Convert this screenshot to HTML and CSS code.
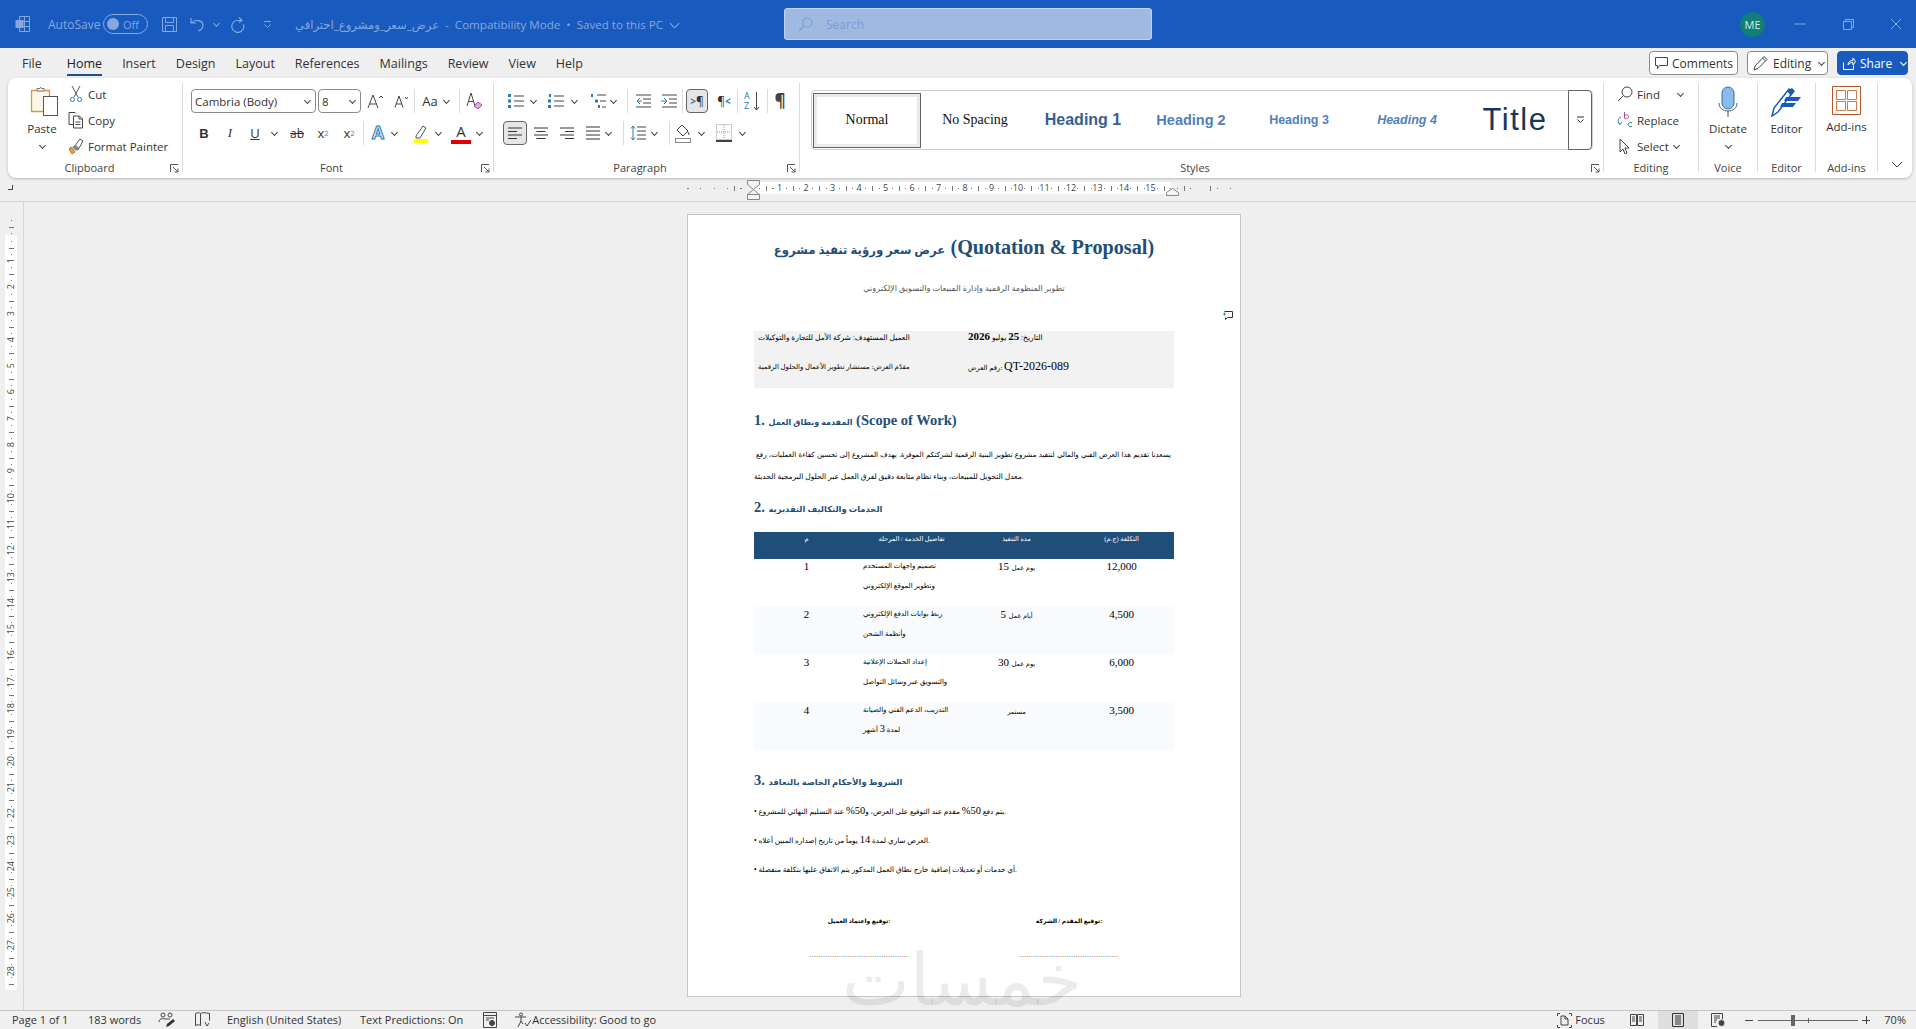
FILE: index.html
```html
<!DOCTYPE html>
<html lang="en">
<head>
<meta charset="utf-8">
<title>Word</title>
<link rel="stylesheet" href="styles.css">
</head>
<body>
<div class="titlebar">
  <div class="tb-left">
    <svg class="t-word" width="16" height="18" viewBox="0 0 16 18" fill="none" stroke="#86a8de"><path d="M4.5 1.5h10v15h-10zM4.5 6.500h10M4.500 11.500h10M9.500 1.500v15"/><rect x="0.500" y="5" width="8" height="8" fill="#86a8de" stroke="none"/></svg>
    <span class="t-autosave">AutoSave</span>
    <span class="toggle"><b></b>Off</span>
    <svg class="t-save" width="17" height="17" viewBox="0 0 17 17" fill="none" stroke="#86a8de"><path d="M1.500 1.500h14v14h-14zM4.500 1.500v5h8v-5M4.500 15.500v-6h8v6"/></svg>
    <svg class="t-undo" width="15" height="16" viewBox="0 0 15 16" fill="none" stroke="#86a8de" stroke-width="1.200"><path d="M1 2v5h5M1.500 7c3-4 11-3 11.500 2 .2 3-2 5-5 6"/></svg>
    <span class="chev t-chev"></span>
    <svg class="t-redo" width="17" height="17" viewBox="0 0 17 17" fill="none" stroke="#86a8de" stroke-width="1.200"><path d="M10 1.500l3 3-3 2M13 4.500H7.500a6 6 0 1 0 7 4"/></svg>
    <svg class="t-custom" width="9" height="9" viewBox="0 0 9 9" fill="none" stroke="#86a8de"><path d="M1 1.500h7M1.500 4.500l3 3 3-3"/></svg>
    <span class="t-doc">عرض_سعر_ومشروع_احترافي&nbsp; -&nbsp; Compatibility Mode &nbsp;•&nbsp; Saved to this PC</span>
    <span class="chev t-docchev"></span>
  </div>
  <div class="search">
    <svg width="15" height="15" viewBox="0 0 15 15" fill="none" stroke="#7a9dd5" stroke-width="1.200"><circle cx="9.500" cy="5.500" r="4.500"/><path d="M6 9l-5 5"/></svg>
    <span>Search</span>
  </div>
  <div class="tb-right">
    <span class="avatar">ME</span>
    <span class="win"><svg width="12" height="2" fill="none" stroke="#86a8de"><path d="M0 1h12"/></svg></span>
    <span class="win"><svg width="11" height="11" viewBox="0 0 11 11" fill="none" stroke="#86a8de"><path d="M.5 2.500h8v8h-8zM2.500 2.500v-2h8v8h-2"/></svg></span>
    <span class="win win-close"><svg width="12" height="12" fill="none" stroke="#86a8de"><path d="M1 1l10 10M11 1L1 11"/></svg></span>
  </div>
</div>

<div class="menubar">
  <span class="tab-file">File</span><span class="tab-on">Home</span><span>Insert</span><span>Design</span><span>Layout</span><span>References</span><span>Mailings</span><span>Review</span><span>View</span><span>Help</span>
  <div class="menu-right">
    <span class="mbtn m-comments"><svg width="13" height="12" viewBox="0 0 13 12" fill="none" stroke="#444"><path d="M.5.500h12v8h-8l-2 3v-3h-2z"/></svg>Comments</span>
    <span class="mbtn m-editing"><svg width="16" height="16" viewBox="0 0 16 16" fill="none" stroke="#444"><path d="M1 15l1-4 9-9.500 3 3-9 9zM9.500 3l3 3"/></svg>Editing<span class="chev"></span></span>
    <span class="mbtn m-share"><svg width="13" height="13" viewBox="0 0 13 13" fill="none" stroke="#fff"><path d="M.5 5.500v7h10v-4M5 8c0-3 2-4.500 5-4.500V1l2.500 3.500L10 8V5.500C8 5.500 6 6 5 8z"/></svg>Share<span class="chev"></span></span>
  </div>
</div>

<div class="ribbon">
  <div class="group g-clip">
    <div class="gbody">
      <div class="big paste">
        <svg width="28" height="31" viewBox="0 0 28 31" fill="none"><path d="M1.500 4.500h18v21h-18z" fill="#fdf6e9" stroke="#d39b3e" stroke-width="1.300"/><path d="M7 5V2.500h3L10.500 1l1 1.500h2.500V5z" fill="#fff" stroke="#777"/><rect x="13.500" y="10.500" width="14" height="19" fill="#fff" stroke="#555"/></svg>
        <span>Paste</span><span class="chev"></span>
      </div>
      <div class="stack">
        <div class="srow"><svg width="16" height="18" viewBox="0 0 16 18" fill="none" stroke="#555"><path d="M4 1l6 11M12 1L6 12"/><circle cx="4.500" cy="14.500" r="2" stroke="#2a7ab8"/><circle cx="11.500" cy="14.500" r="2" stroke="#2a7ab8"/></svg>Cut</div>
        <div class="srow"><svg width="16" height="18" viewBox="0 0 16 18" fill="none" stroke="#444"><path d="M1 1.500h6l1 1M1 1.500v12h4"/><path d="M5.500 5h6l3 3v9h-9zM11 5v3h3.500M7.500 11h5M7.500 13.500h5"/></svg>Copy</div>
        <div class="srow"><svg width="16" height="17" viewBox="0 0 16 17" fill="none"><path d="M2 9l4 5-3 2-3-5z" fill="#e8a33c" stroke="#b9772a" transform="translate(1 0)"/><path d="M6 9l6-8 3 2-5 9z" fill="#fff" stroke="#555"/><path d="M4 9l4-2 3 3-3 3z" fill="#888"/></svg>Format Painter</div>
      </div>
    </div>
    <div class="glabel lb-off">Clipboard<svg class="launch" width="9" height="9" fill="none" stroke="#555"><path d="M.5 8V.5H8M3 3l5 5M8 4.500V8H4.500"/></svg></div>
  </div>

  <div class="group g-font">
    <div class="grows">
      <div class="frow">
        <span class="select sel-name">Cambria (Body)<span class="chev"></span></span>
        <span class="select sel-size ml2">8<span class="chev"></span></span>
        <span class="cell ml1"><svg width="16" height="15" viewBox="0 0 16 15" fill="none" stroke="#444"><path d="M1 14L6 1l5 13M2.800 10h6.400M12 4l2-2 2 2"/></svg></span>
        <span class="cell"><svg width="15" height="13" viewBox="0 0 15 13" fill="none" stroke="#444"><path d="M1 12.500L5 1l4 11.500M2.500 9h5M11 2l1.500 2L14 2"/></svg></span>
        <i class="vsep ml0"></i>
        <span class="txtbtn ml6">Aa</span><span class="chev cw"></span>
        <i class="vsep ml6"></i>
        <svg class="ml6" width="17" height="18" viewBox="0 0 17 18" fill="none"><path d="M1 14L5 1l4 13M2.500 9.500h5" stroke="#444"/><path d="M8 14l4-4 4 3-4 4z" fill="#e6a6e0" stroke="#a64ca6"/></svg>
      </div>
      <div class="frow">
        <span class="cell lt b">B</span>
        <span class="cell lt i">I</span>
        <span class="cell w24 lt u">U</span><span class="chev cw"></span>
        <span class="cell ml3 lt s">ab</span>
        <span class="cell lt">x<sub>2</sub></span>
        <span class="cell lt">x<sup>2</sup></span>
        <i class="vsep ml1"></i>
        <span class="ml5 w18 fx">A</span><span class="chev cw"></span>
        <svg class="ml10 w20" width="20" height="20" viewBox="0 0 20 20" fill="none"><path d="M5 13l7-10 3 2-6 10H5z" stroke="#555"/><rect x="3" y="16" width="14" height="4" fill="#ffff00"/></svg><span class="chev cw"></span>
        <span class="ml6 w20 fcolor">A</span><span class="chev cw ml1"></span>
      </div>
    </div>
    <div class="glabel">Font<svg class="launch" width="9" height="9" fill="none" stroke="#555"><path d="M.5 8V.5H8M3 3l5 5M8 4.500V8H4.500"/></svg></div>
  </div>

  <div class="group g-para">
    <div class="grows">
      <div class="frow pr1">
        <svg width="16" height="16" viewBox="0 0 16 16"><path d="M6 3h10M6 8h10M6 13h10" stroke="#444"/><path d="M0 1h3v3H0zM0 6.500h3v3H0zM0 12h3v3H0z" fill="#2a7ab8"/></svg><span class="chev cw ml2"></span>
        <svg class="ml8" width="16" height="16" viewBox="0 0 16 16"><path d="M6 3h10M6 8h10M6 13h10" stroke="#444"/><path d="M1 1h2v3H1zM0 6.500h3v3H0zM0 12h3v3H0z" fill="#2a7ab8"/></svg><span class="chev cw ml3"></span>
        <svg class="ml9" width="16" height="16" viewBox="0 0 16 16"><path d="M7 2h9M10 8h6M12 14h4" stroke="#444"/><path d="M1 1h2v3H1zM5 6.500h3v3H5zM8 12h2v3H8z" fill="#2a7ab8"/></svg><span class="chev cw"></span>
        <i class="vsep ml7"></i>
        <svg class="ml7" width="16" height="16" viewBox="0 0 16 16" fill="none" stroke="#444"><path d="M1 2h15M8 6h8M8 10h8M1 14h15"/><path d="M5 5L2 8l3 3M2 8h5" stroke="#2a7ab8"/></svg>
        <svg class="ml10" width="16" height="16" viewBox="0 0 16 16" fill="none" stroke="#444"><path d="M1 2h15M8 6h8M8 10h8M1 14h15"/><path d="M3 5l3 3-3 3M0 8h5" stroke="#2a7ab8"/></svg>
        <i class="vsep ml5"></i>
        <span class="onbtn w22 ml3 pil"><em>&gt;</em>¶</span>
        <span class="pil w14 ml9">¶<em>&lt;</em></span>
        <i class="vsep ml6"></i>
        <span class="sort ml6"><span class="sort-t">A<br>Z</span><svg width="7" height="20" viewBox="0 0 7 20" fill="none" stroke="#444"><path d="M3.500 1v18M1 16l2.500 3L6 16"/></svg></span>
        <i class="vsep ml7"></i>
        <span class="pilbig ml6">¶</span>
      </div>
      <div class="frow pr2">
        <span class="onbtn w24"><svg width="14" height="13" fill="none" stroke="#333"><path d="M0 1h14M0 4.500h9M0 8h14M0 11.500h9"/></svg></span>
        <span class="cell w24 ml2"><svg width="14" height="13" fill="none" stroke="#333"><path d="M0 1h14M2.500 4.500h9M0 8h14M2.500 11.500h9"/></svg></span>
        <span class="cell w24 ml2"><svg width="14" height="13" fill="none" stroke="#333"><path d="M0 1h14M5 4.500h9M0 8h14M5 11.500h9"/></svg></span>
        <svg class="ml6" width="16" height="14" fill="none" stroke="#333"><path d="M1 1h14M1 5h14M1 9h14M1 13h14"/></svg><span class="chev cw"></span>
        <i class="vsep ml8"></i>
        <svg class="ml6" width="16" height="16" viewBox="0 0 16 16" fill="none"><path d="M7 2h9M7 6h9M7 10h9M7 14h9" stroke="#444"/><path d="M3 1v14M1 3.500L3 1l2 2.500M1 12.500L3 15l2-2.500" stroke="#2a7ab8"/></svg><span class="chev cw ml1"></span>
        <i class="vsep ml8"></i>
        <svg class="ml5" width="16" height="19" viewBox="0 0 16 19" fill="none"><path d="M7 1l6 6-5 5-6-6zM13 8l1 3" stroke="#444"/><rect x=".500" y="14.500" width="15" height="4" stroke="#888"/></svg><span class="chev cw ml3"></span>
        <svg class="ml8" width="16" height="18" viewBox="0 0 16 18" fill="none"><path d="M.500.500h15v15H.500z" stroke="#999" stroke-dasharray="1 1"/><path d="M8 1v14M1 8h14" stroke="#999" stroke-dasharray="1 1"/><path d="M0 17h16" stroke="#000" stroke-width="1.500"/></svg><span class="chev cw ml3"></span>
      </div>
    </div>
    <div class="glabel">Paragraph<svg class="launch" width="9" height="9" fill="none" stroke="#555"><path d="M.5 8V.5H8M3 3l5 5M8 4.500V8H4.500"/></svg></div>
  </div>

  <div class="group g-styles">
    <div class="gallery">
      <span class="sty sty-on">Normal</span>
      <span class="sty">No Spacing</span>
      <span class="sty st-h1">Heading 1</span>
      <span class="sty st-h2">Heading 2</span>
      <span class="sty st-h3">Heading 3</span>
      <span class="sty st-h4">Heading 4</span>
      <span class="sty st-title">Title</span>
      <span class="gal-scroll"><svg width="9" height="8" fill="none" stroke="#333"><path d="M1 1h7M1.500 3.500l3 3 3-3"/></svg></span>
    </div>
    <div class="glabel">Styles<svg class="launch" width="9" height="9" fill="none" stroke="#555"><path d="M.5 8V.5H8M3 3l5 5M8 4.500V8H4.500"/></svg></div>
  </div>

  <div class="group g-edit">
    <div class="stack st-edit">
      <div class="srow"><svg width="16" height="16" viewBox="0 0 16 16" fill="none" stroke="#444"><circle cx="10" cy="6" r="5"/><path d="M6.500 9.500L1 15"/></svg>Find<span class="chev find-chev"></span></div>
      <div class="srow"><svg width="16" height="16" viewBox="0 0 16 16" fill="none"><path d="M4 5C1 6 0 10 3 12M1 10l2 2.500L5 10" stroke="#2a7ab8"/><path d="M7.500 0v6.500M7.500 4.500a2 2 0 1 1 0 .5" stroke="#a64ca6"/><path d="M15 11a2.200 2.200 0 1 0 0 3" stroke="#2a7ab8"/></svg>Replace</div>
      <div class="srow"><svg width="16" height="16" viewBox="0 0 16 16" fill="#fff" stroke="#444"><path d="M3 1l9 9H8l2 5-2 1-2-5-3 3z"/></svg>Select<span class="chev sel-chev"></span></div>
    </div>
    <div class="glabel lb-none">Editing</div>
  </div>

  <div class="group g-voice">
    <div class="big">
      <svg width="20" height="31" viewBox="0 0 20 31" fill="none"><rect x="4" y="1" width="12" height="22" rx="6" fill="#8bbdeb" stroke="#2f6fb3"/><path d="M1 17c0 5 4 8 9 8s9-3 9-8" stroke="#555"/><path d="M10 25v6" stroke="#555"/></svg>
      <span>Dictate</span><span class="chev"></span>
    </div>
    <div class="glabel lb-none">Voice</div>
  </div>

  <div class="group g-editor">
    <div class="big">
      <svg width="31" height="31" viewBox="0 0 31 31" fill="none"><path d="M1 30L3 22 18 3l4 3L7 26z" fill="#fff" stroke="#185abd" stroke-width="1.500"/><path d="M16 5l5-3 3 3-4 5zM15 11h15l-3 4H13zM11 17h14l-3 4H9z" fill="#185abd"/></svg>
      <span>Editor</span>
    </div>
    <div class="glabel lb-none">Editor</div>
  </div>

  <div class="group g-addins">
    <div class="big">
      <svg width="29" height="29" viewBox="0 0 29 29" fill="none" stroke="#b5562a"><path d="M.5.500h28v28H.500z"/><path d="M4.500 4.500h9v9h-9zM15.500 4.500h9v9h-9zM4.500 15.500h9v9h-9zM15.500 15.500h9v9h-9z" stroke="#c97a52"/></svg>
      <span>Add-ins</span>
    </div>
    <div class="glabel lb-none">Add-ins</div>
  </div>

  <svg class="collapse" width="12" height="7" fill="none" stroke="#444"><path d="M1 1l5 5 5-5"/></svg>
</div>

<div class="rulerrow">
  <span class="corner"></span>
  <div class="hruler">
    <div class="hr-side ticks"></div>
    <div class="hr-body ticks">
      <span>1</span><span>2</span><span>3</span><span>4</span><span>5</span><span>6</span><span>7</span><span>8</span><span>9</span><span>10</span><span>11</span><span>12</span><span>13</span><span>14</span><span>15</span>
    </div>
    <div class="hr-end ticks"></div>
    <svg class="mark-left" width="13" height="20" viewBox="0 0 13 20" fill="#f4f4f4" stroke="#888"><path d="M.5.500h12v4L6.500 9.500.5 4.500z"/><path d="M.5 14.500l6-5 6 5v5H.5zM.5 14.500h12"/></svg>
    <svg class="mark-right" width="13" height="8" viewBox="0 0 13 8" fill="#f4f4f4" stroke="#888"><path d="M.5 7.500v-3l6-4 6 4v3z"/></svg>
  </div>
</div>

<div class="workspace">
  <div class="vruler">
    <div class="vr-top vticks"></div>
    <div class="vr-body vticks">
      <span>1</span><span>2</span><span>3</span><span>4</span><span>5</span><span>6</span><span>7</span><span>8</span><span>9</span><span>10</span><span>11</span><span>12</span><span>13</span><span>14</span><span>15</span><span>16</span><span>17</span><span>18</span><span>19</span><span>20</span><span>21</span><span>22</span><span>23</span><span>24</span><span>25</span><span>26</span><span>27</span><span>28</span>
    </div>
  </div>
  <div class="page">
    <svg class="comment-mark" width="10" height="9" viewBox="0 0 10 9" fill="none"><path d="M1.500.500h8v6h-5l-2 2v-2" stroke="#333"/><path d="M0 3h3M1.500 1.500v3" stroke="#2e9e4f"/></svg>
    <h1 class="doc-title"><span class="ar">عرض سعر ورؤية تنفيذ مشروع</span> (Quotation &amp; Proposal)</h1>
    <p class="doc-sub">تطوير المنظومة الرقمية وإدارة المبيعات والتسويق الإلكتروني</p>
    <div class="meta">
      <div>العميل المستهدف: شركة الأمل للتجارة والتوكيلات</div>
      <div>التاريخ: <b>25</b> يوليو <b>2026</b></div>
      <div class="m2">مقدّم العرض: مستشار تطوير الأعمال والحلول الرقمية</div>
      <div class="m2">رقم العرض: <span class="qt">QT-2026-089</span></div>
    </div>
    <h2 class="doc-h h-1"><span class="num">1.</span> <span class="ar">المقدمة ونطاق العمل</span> (Scope of Work)</h2>
    <p class="doc-line line-one">يسعدنا تقديم هذا العرض الفني والمالي لتنفيذ مشروع تطوير البنية الرقمية لشركتكم الموقرة. يهدف المشروع إلى تحسين كفاءة العمليات، رفع</p>
    <p class="doc-line">معدل التحويل للمبيعات، وبناء نظام متابعة دقيق لفرق العمل عبر الحلول البرمجية الحديثة.</p>
    <h2 class="doc-h h-2"><span class="num">2.</span> <span class="ar">الخدمات والتكاليف التقديرية</span></h2>
    <table class="costs">
      <thead>
        <tr><th>م</th><th>تفاصيل الخدمة / المرحلة</th><th>مدة التنفيذ</th><th>التكلفة (ج.م)</th></tr>
      </thead>
      <tbody>
        <tr><td>1</td><td class="det"><span>تصميم واجهات المستخدم</span><span>وتطوير الموقع الإلكتروني</span></td><td>15 <span class="ar">يوم عمل</span></td><td>12,000</td></tr>
        <tr class="alt"><td>2</td><td class="det"><span>ربط بوابات الدفع الإلكتروني</span><span>وأنظمة الشحن</span></td><td>5 <span class="ar">أيام عمل</span></td><td>4,500</td></tr>
        <tr><td>3</td><td class="det"><span>إعداد الحملات الإعلانية</span><span>والتسويق عبر وسائل التواصل</span></td><td>30 <span class="ar">يوم عمل</span></td><td>6,000</td></tr>
        <tr class="alt"><td>4</td><td class="det"><span>التدريب، الدعم الفني والصيانة</span><span>لمدة <b class="n">3</b> أشهر</span></td><td><span class="ar">مستمر</span></td><td>3,500</td></tr>
      </tbody>
    </table>
    <h2 class="doc-h h-3"><span class="num">3.</span> <span class="ar">الشروط والأحكام الخاصة بالتعاقد</span></h2>
    <div class="terms">
      <p>• يتم دفع <b class="n">50%</b> مقدم عند التوقيع على العرض، و<b class="n">50%</b> عند التسليم النهائي للمشروع.</p>
      <p>• العرض ساري لمدة <b class="n">14</b> يوماً من تاريخ إصداره المبين أعلاه.</p>
      <p>• أي خدمات أو تعديلات إضافية خارج نطاق العمل المذكور يتم الاتفاق عليها بتكلفة منفصلة.</p>
    </div>
    <div class="signs">
      <div>توقيع واعتماد العميل:</div>
      <div>توقيع المقدم / الشركة:</div>
      <div class="dots">............................................</div>
      <div class="dots">............................................</div>
    </div>
  </div>
  <div class="watermark">خمسات</div>
</div>

<div class="status">
  <span class="st-a">Page 1 of 1</span>
  <span class="st-b">183 words</span>
  <svg class="st-c" width="18" height="16" viewBox="0 0 18 16" fill="none"><circle cx="5" cy="3" r="2" stroke="#444"/><circle cx="12" cy="3" r="2" stroke="#444"/><path d="M1 10c0-3 3-4 6-3h5" stroke="#444"/><path d="M8 15l1-3 6-5 2 2-6 5z" fill="#333"/></svg>
  <svg class="st-d" width="15" height="16" viewBox="0 0 15 16" fill="none" stroke="#444"><path d="M.5 1.500c2-1 4-1 5 0v12c-1-1-3-1-5 0zM5.500 1.500c1-1 5-1 9 0v7M10 10l2 4 2-3" /></svg>
  <span class="st-e">English (United States)</span>
  <span class="st-f">Text Predictions: On</span>
  <svg class="st-g" width="14" height="16" viewBox="0 0 14 16" fill="none" stroke="#444"><path d="M.5.500h13v15H.500zM.5 3.500h13M3 6h8M3 8h3"/><circle cx="9" cy="11" r="2.500" fill="#444"/></svg>
  <svg class="st-h" width="17" height="16" viewBox="0 0 17 16" fill="none" stroke="#444"><circle cx="7" cy="2.500" r="1.500"/><path d="M1 5h11M7 5v4l-3 6M7 9l2 3M11 11l2 3 4-6"/></svg>
  <span class="st-i">Accessibility: Good to go</span>
  <div class="st-right">
    <svg width="15" height="15" viewBox="0 0 15 15" fill="none" stroke="#444"><path d="M.5 3V.5H3M12 .5h2.500V3M.5 12v2.500H3M12 14.500h2.500V12M4 12V3h4l3 3v6zM8 3v3h3"/></svg>
    <span class="st-focus">Focus</span>
    <svg class="st-read" width="14" height="12" fill="none" stroke="#444"><path d="M.5.500h6v11h-6zM7.500.500h6v11h-6zM2 3h3M2 5h3M2 7h3M9 3h3M9 5h3M9 7h3"/></svg>
    <span class="st-print"><svg width="12" height="14" fill="none" stroke="#333"><path d="M.5.500h11v13H.500zM3 3h6M3 5h6M3 7h6M3 9h6M3 11h6"/></svg></span>
    <svg class="st-web" width="15" height="14" viewBox="0 0 15 14" fill="none" stroke="#444"><path d="M6 13.500H.5V.5h11v6M3 3h6M3 5h6M3 7h3M3 9h2"/><circle cx="10.500" cy="10" r="3.500" fill="#444" stroke="#f0f0f0"/></svg>
    <span class="zoom-minus"></span>
    <span class="slider"><b></b><i></i></span>
    <span class="zoom-plus"></span>
    <span class="st-pct">70%</span>
  </div>
</div>
</body>
</html>
```

FILE: styles.css
```css
* {margin: 0px;padding: 0px;box-sizing: border-box;}
html, body {width: 1916px;height: 1029px;overflow: hidden;}
body {position: relative;display: flex;flex-direction: column;background-color: #efefef;font-family: "Open Sans", "DejaVu Sans", sans-serif;font-size: 11.5px;color: #333;}
svg {flex: none;display: block;}

.ml0 {margin-left: 0;}
.ml1 {margin-left: 1px;}
.ml2 {margin-left: 2px;}
.ml3 {margin-left: 3px;}
.ml5 {margin-left: 5px;}
.ml6 {margin-left: 6px;}
.ml7 {margin-left: 7px;}
.ml8 {margin-left: 8px;}
.ml9 {margin-left: 9px;}
.ml10 {margin-left: 10px;}

.chev {display: inline-flex;align-items: center;justify-content: center;flex: none;}
.chev:before {content: '';width: 4px;height: 4px;border-right: 1px solid #444;border-bottom: 1px solid #444;transform: translateY(-1px) rotate(45deg);}
.cw {width: 14px;}

/* title bar */
.titlebar {height: 48px;flex: none;background-color: #185abd;display: flex;align-items: center;color: #86a8de;}
.tb-left {width: 784px;display: flex;align-items: center;padding-left: 15px;font-size: 12px;}
.t-autosave {margin-left: 17px;width: 55px;}
.toggle {width: 45px;height: 20px;border: 1px solid #86a8de;border-radius: 10px;display: flex;align-items: center;gap: 4px;padding-left: 3px;font-size: 11px;}
.toggle b {width: 12px;height: 12px;border-radius: 50%;background-color: #86a8de;}
.t-save {margin-left: 13px;}
.t-undo {margin-left: 12px;}
.t-chev {margin-left: 8px;width: 6px;}
.t-chev:before, .t-docchev:before {border-color: #86a8de;}
.t-redo {margin-left: 10px;}
.t-custom {margin-left: 17px;}
.t-doc {margin-left: 23px;white-space: nowrap;font-size: 11.600px;}
.t-docchev {margin-left: 8px;}
.t-docchev:before {width: 6px;height: 6px;}
.search {width: 368px;height: 32px;background-color: #a0b9e0;border: 1px solid #c3d3ec;border-radius: 3px;display: flex;align-items: center;padding-left: 13px;gap: 13px;color: #7a9dd5;font-size: 12px;}
.tb-right {flex: 1;display: flex;align-items: center;justify-content: flex-end;}
.avatar {width: 25px;height: 25px;border-radius: 50%;background-color: #0f7f78;color: #cfeeea;font-size: 11px;display: flex;align-items: center;justify-content: center;margin-right: 11px;}
.win {width: 48px;display: flex;justify-content: center;}
.win-close {width: 40px;margin-left: 4px;}

/* tabs */
.menubar {height: 30px;flex: none;display: flex;align-items: center;gap: 20px;padding-left: 22px;padding-right: 8px;font-size: 12.5px;color: #333;}
.tab-file {margin-right: 5px;}
.tab-on {position: relative;color: #222;}
.tab-on:after {content: '';position: absolute;left: 0;right: 0;bottom: -4px;height: 2px;background-color: #1f4e8c;}
.menu-right {margin-left: auto;display: flex;gap: 9px;align-items: center;}
.mbtn {height: 24px;border: 1px solid #8a8a8a;border-radius: 4px;background-color: #fff;display: flex;align-items: center;gap: 4px;padding-left: 5px;font-size: 12px;}
.m-comments {width: 89px;}
.m-editing {width: 81px;}
.m-editing .chev {margin-left: 2px;width: 8px;}
.m-share {width: 71px;background-color: #185abd;border-color: #185abd;color: #fff;}
.m-share .chev {margin-left: 3px;width: 8px;}
.m-share .chev:before {border-color: #fff;}

/* ribbon */
.ribbon {position: relative;height: 100px;flex: none;margin: 0 4px 0 8px;background-color: #fff;border-radius: 8px;box-shadow: 0 1px 3px rgba(0,0,0,.22);padding-top: 5px;display: flex;align-items: flex-start;font-size: 11.5px;}
.group {height: 89px;flex: none;display: flex;flex-direction: column;border-right: 1px solid #dcdcdc;}
.g-clip {width: 175px;}
.g-font {width: 311px;}
.g-para {width: 306px;}
.g-styles {width: 804px;}
.g-edit {width: 95px;}
.g-voice {width: 59px;}
.g-editor {width: 58px;}
.g-addins {width: 62px;}
.gbody {flex: 1;display: flex;padding-left: 14px;}
.grows {flex: 1;padding-top: 6px;display: flex;flex-direction: column;gap: 8px;}
.frow {height: 24px;display: flex;align-items: center;padding-left: 8px;}
.pr1 {padding-left: 14px;}
.pr2 {padding-left: 9px;}
.glabel {position: relative;height: 14px;margin-bottom: -3px;line-height: 14px;text-align: center;padding-right: 13px;color: #444;font-size: 11px;}
.lb-off {padding-right: 11px;}
.lb-none {padding-right: 0;}
.launch {position: absolute;right: 3px;top: 3px;}
.big {flex: 1;display: flex;flex-direction: column;align-items: center;padding-top: 3px;}
.big span:not(.chev) {margin-top: 4px;line-height: 16px;}
.big .chev {margin-top: 4px;height: 10px;}
.paste {flex: none;width: 40px;}
.paste svg {margin-left: 4px;}
.stack {margin-left: 6px;margin-top: -2px;}
.srow {height: 26px;display: flex;align-items: center;gap: 4px;white-space: nowrap;}
.select {height: 24px;border: 1px solid #8a8a8a;border-radius: 4px;display: flex;align-items: center;justify-content: space-between;padding-left: 3px;padding-right: 5px;font-size: 11.5px;}
.sel-name {width: 125px;}
.sel-size {width: 43px;}
.cell {width: 26px;height: 24px;display: flex;align-items: center;justify-content: center;flex: none;}
.w24 {width: 24px;}
.w22 {width: 22px;}
.w20 {width: 20px;}
.w18 {width: 18px;}
.w14 {width: 14px;}
.vsep {display: block;width: 1px;height: 24px;background-color: #dcdcdc;flex: none;}
.txtbtn {width: 18px;font-size: 13px;text-align: center;}
.lt {font-size: 13px;color: #333;}
.lt sub, .lt sup {font-size: 7px;color: #2a7ab8;}
.b {font-weight: bold;font-family: "Liberation Sans", sans-serif;}
.i {font-style: italic;font-family: "Liberation Serif", serif;}
.u {text-decoration: underline;}
.s {text-decoration: line-through;font-size: 12px;}
.fx {font-size: 18px;font-weight: bold;color: #dff0fb;-webkit-text-stroke: 1px #1f78b4;text-align: center;line-height: 24px;font-family: "Liberation Sans", sans-serif;}
.fcolor {font-size: 15px;text-align: center;line-height: 17px;border-bottom: 4px solid #e00000;height: 21px;}
.onbtn {height: 24px;background-color: #e6e6e6;border: 1px solid #666;border-radius: 4px;display: flex;align-items: center;justify-content: center;flex: none;}
.pil {font-size: 12px;display: flex;align-items: center;justify-content: center;height: 24px;}
.pil em {color: #2a7ab8;font-style: normal;font-size: 10px;font-weight: bold;}
.sort {display: flex;align-items: center;width: 16px;}
.sort-t {font-size: 9px;line-height: 10px;color: #2a7ab8;width: 9px;}
.pilbig {width: 12px;font-size: 17px;font-weight: bold;text-align: center;color: #444;line-height: 24px;}
.gallery {height: 60px;margin-top: 7px;margin-left: 11px;width: 782px;border: 1px solid #cfcfcf;border-radius: 4px;display: flex;align-items: center;padding-left: 1px;position: relative;flex: none;}
.sty {width: 108px;height: 55px;display: flex;align-items: center;justify-content: center;flex: none;font-family: "Liberation Serif", serif;font-size: 14px;color: #111;}
.sty-on {border: 1px solid #666;box-shadow: inset 0 0 0 3px #eaeaea;}
.st-h1 {font-family: "Liberation Sans", sans-serif;font-weight: bold;font-size: 16px;color: #365f91;}
.st-h2 {font-family: "Liberation Sans", sans-serif;font-weight: bold;font-size: 14.500px;color: #4f81bd;}
.st-h3 {font-family: "Liberation Sans", sans-serif;font-weight: bold;font-size: 12.500px;color: #4f81bd;}
.st-h4 {font-family: "Liberation Sans", sans-serif;font-weight: bold;font-style: italic;font-size: 12.500px;color: #4f81bd;}
.st-title {font-family: "Liberation Sans", sans-serif;font-size: 31px;letter-spacing: 1.500px;color: #17365d;}
.gal-scroll {width: 24px;height: 60px;border: 1px solid #666;border-radius: 0 4px 4px 0;display: flex;align-items: center;justify-content: center;flex: none;margin-left: -1px;background-color: #fff;}
.g-styles .glabel {margin-top: auto;}
.st-edit {margin-left: 13px;flex: 1;margin-top: -2px;}
.find-chev {margin-left: 14px;}
.sel-chev {margin-left: 0;width: 8px;}
.collapse {position: absolute;left: 1883px;top: 83px;}

/* rulers */
.rulerrow {height: 24px;flex: none;position: relative;border-bottom: 1px solid #d2d2d2;}
.corner {position: absolute;left: 8px;top: 7px;width: 5px;height: 5px;border-right: 1px solid #444;border-bottom: 1px solid #444;}
.hruler {position: relative;margin-left: 686px;margin-top: 4px;width: 547px;height: 12px;display: flex;font-size: 9px;color: #444;}
.ticks {background-image: repeating-linear-gradient(90deg, transparent 0 6px, #777 6px 7px, transparent 7px 19.500px, #777 19.500px 20.500px, transparent 20.500px 26.500px), repeating-linear-gradient(90deg, transparent 0 13px, #777 13px 14px, transparent 14px 26.500px);background-size: 100% 1px, 100% 5px;background-repeat: no-repeat;background-position: 0 center;}
.vticks {background-image: repeating-linear-gradient(180deg, transparent 0 6px, #777 6px 7px, transparent 7px 19px, #777 19px 20px, transparent 20px 26.300px), repeating-linear-gradient(180deg, transparent 0 13px, #777 13px 14px, transparent 14px 26.300px);background-size: 1px 100%, 5px 100%;background-repeat: no-repeat;background-position: center 0;}
.hr-side {width: 67px;background-position: -18px center;background-size: 200% 1px, 200% 5px;}
.hr-body {width: 418px;background-color: #fff;display: flex;padding-left: 13.250px;}
.hr-body span {width: 26.500px;flex: none;text-align: center;line-height: 12px;}
.hr-end {width: 62px;}
.mark-left {position: absolute;left: 61px;top: -2px;}
.mark-right {position: absolute;left: 480px;top: 6px;}

/* document */
.workspace {position: relative;flex: 1;display: flex;}
.vruler {width: 24px;flex: none;border-right: 1px solid #d8d8d8;padding-top: 12px;padding-left: 5px;font-size: 9px;color: #444;}
.vr-top {width: 12px;height: 21px;}
.vr-body {width: 12px;height: 755px;background-color: #fff;padding-top: 13px;display: flex;flex-direction: column;}
.vr-body span {height: 26.300px;flex: none;writing-mode: vertical-rl;transform: rotate(180deg);text-align: center;line-height: 12px;}
.page {position: relative;width: 554px;height: 783px;margin-top: 12px;margin-left: 663px;flex: none;background-color: #fff;border: 1px solid #c6c6c6;padding: 18px 66px 0 66px;font-family: "Liberation Serif", "DejaVu Sans", serif;color: #000;font-size: 7.500px;}
.page span, .page b {line-height: 1;}
.comment-mark {position: absolute;left: 535px;top: 96px;}
.doc-title {text-align: center;font-size: 20.200px;line-height: 28px;color: #1f4e79;font-weight: bold;white-space: nowrap;}
.doc-title .ar {font-size: 11.700px;}
.doc-sub {margin-top: 20px;text-align: center;line-height: 16px;color: #555;font-size: 8.100px;white-space: nowrap;}
.meta {margin-top: 34px;height: 57px;background-color: #f2f2f2;display: grid;grid-template-columns: 210px 210px;grid-template-rows: 28.500px 28.500px;font-size: 7.500px;}
.meta div {padding-left: 4px;line-height: 14px;white-space: nowrap;}
.meta .m2 {font-size: 6.900px;}
.meta b {font-size: 11px;}
.qt {font-size: 12px;}
.doc-h {font-size: 14.500px;line-height: 20px;color: #1f4e79;font-weight: bold;white-space: nowrap;}
.doc-h .ar {font-size: 8.400px;}
.h-1 .ar {font-size: 8px;}
.num {letter-spacing: 2px;}
.h-1 {margin-top: 22px;}
.h-2 {margin-top: 10.500px;}
.h-3 {margin-top: 19px;}
.doc-line {line-height: 21px;white-space: nowrap;}
.line-one {margin-top: 14.500px;text-align-last: justify;padding-left: 2px;padding-right: 3px;font-size: 7.100px;}
.costs {margin-top: 15px;width: 420px;border-collapse: collapse;table-layout: fixed;}
.costs th {height: 27px;background-color: #1f4e79;color: #fff;font-weight: normal;font-size: 6.600px;line-height: 14px;vertical-align: top;}
.costs td {height: 48px;vertical-align: top;text-align: center;font-size: 11px;line-height: 14px;white-space: nowrap;}
.costs .ar {font-size: 6.500px;}
.costs .alt td {background-color: #f9fafb;}
.costs .det {text-align: left;padding-left: 4px;font-size: 7px;}
.costs .det span {display: block;height: 20px;line-height: 14px;}
.n {font-size: 10.500px;font-weight: normal;}
.terms {margin-top: 6.500px;font-size: 7.300px;}
.terms p {line-height: 29px;white-space: nowrap;}
.signs {margin-top: 29.500px;display: grid;grid-template-columns: 210px 210px;text-align: center;line-height: 16px;font-size: 6px;font-weight: bold;}
.dots {margin-top: 18px;font-size: 7px;letter-spacing: .5px;font-weight: normal;color: #444;}
.watermark {position: absolute;left: 842px;top: 750px;width: 231px;height: 56px;font-family: "DejaVu Sans", sans-serif;font-size: 72px;line-height: 56px;color: rgba(0,0,0,.08);text-align: center;white-space: nowrap;}

/* status bar */
.status {height: 19px;flex: none;border-top: 1px solid #c6c6c6;background-color: #f0f0f0;display: flex;align-items: center;font-size: 11px;color: #333;position: relative;padding-left: 12px;white-space: nowrap;}
.status span {line-height: 18px;}
.st-a {width: 76px;}
.st-b {width: 70px;}
.st-d {margin-left: 19px;}
.st-e {margin-left: 17px;width: 133px;}
.st-g {margin-left: 20px;}
.st-h {margin-left: 17px;}
.st-i {margin-left: 1px;}
.st-right {margin-left: auto;padding-right: 10px;display: flex;align-items: center;}
.st-focus {margin-left: 3px;width: 30px;}
.st-read {margin-left: 25px;}
.st-print {margin-left: 14px;width: 40px;height: 18px;background-color: #dedede;display: flex;align-items: center;justify-content: center;}
.st-web {margin-left: 13px;}
.zoom-minus {margin-left: 19px;width: 8px;height: 1px;background-color: #444;}
.slider {position: relative;margin-left: 5px;width: 100px;height: 1px;background-color: #666;}
.slider b {position: absolute;left: 33px;top: -5px;width: 4px;height: 11px;background-color: #666;}
.slider i {position: absolute;left: 50px;top: -2px;width: 1px;height: 5px;background-color: #666;}
.zoom-plus {position: relative;margin-left: 4px;width: 8px;height: 8px;background-image: linear-gradient(#444,#444), linear-gradient(#444,#444);background-size: 8px 1px, 1px 8px;background-position: center;background-repeat: no-repeat;}
.st-pct {margin-left: 14px;}
```
